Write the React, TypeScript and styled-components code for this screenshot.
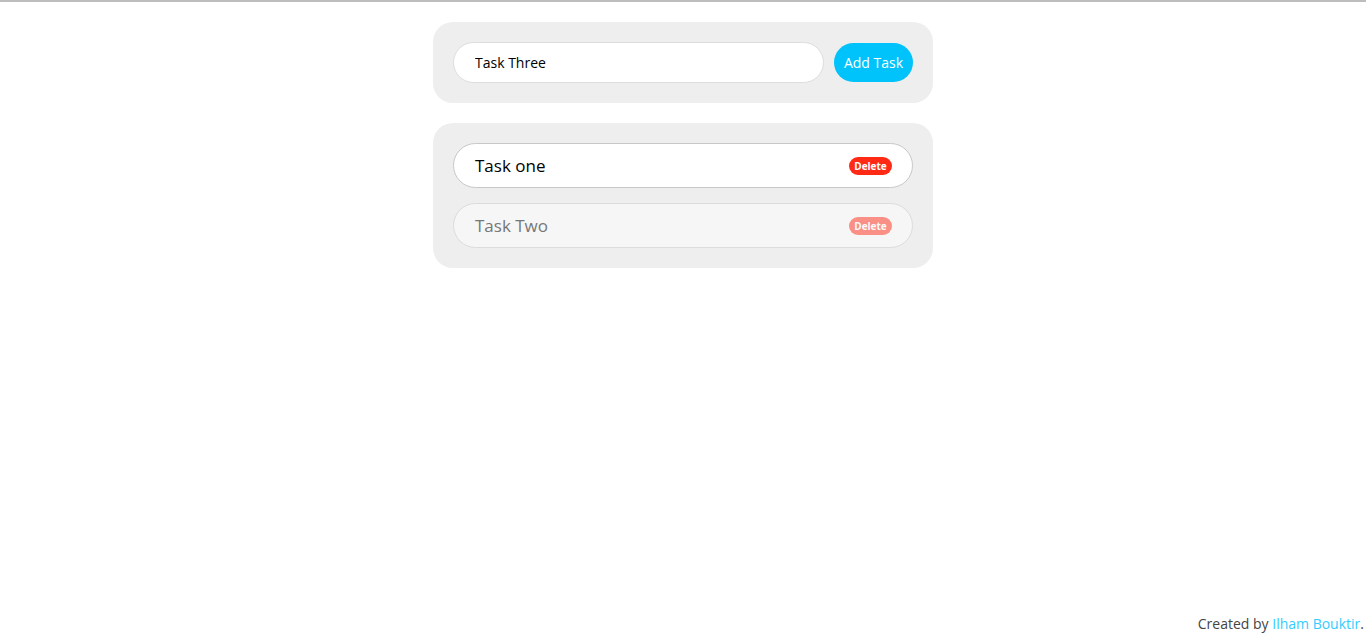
import React, { useState } from "react";
import styled, { createGlobalStyle } from "styled-components";

const Global = createGlobalStyle`
  html, body { margin: 0; padding: 0; background: #fff; }
  body {
    font-family: "Comic Sans MS", "Open Sans", "DejaVu Sans", sans-serif;
    border-top: 2px solid #bdbdbd;
    min-height: 638px;
  }
  #root { min-height: 638px; }
`;

const Page = styled.div`
  min-height: 638px;
  display: flex;
  flex-direction: column;
  align-items: center;
  padding-top: 20px;
  box-sizing: border-box;
  position: relative;
`;

const Card = styled.div`
  width: 500px;
  box-sizing: border-box;
  background: #eeeeee;
  border-radius: 20px;
  padding: 20px;
  margin-bottom: 20px;
`;

const Form = styled.form`
  display: flex;
  align-items: center;
  gap: 10px;
  margin: 0;
`;

const Input = styled.input`
  flex: 1;
  height: 41px;
  box-sizing: border-box;
  border: 1px solid #dddddd;
  border-radius: 21px;
  background: #fff;
  padding: 0 21px;
  font-family: inherit;
  font-size: 14px;
  color: #000;
  outline: none;
`;

const AddButton = styled.button`
  width: 79px;
  height: 39px;
  border: none;
  border-radius: 20px;
  background: #00c3fb;
  color: #fff;
  font-family: inherit;
  font-size: 14px;
  padding: 0;
  cursor: pointer;
`;

const List = styled.ul`
  list-style: none;
  margin: 0;
  padding: 0;
  display: flex;
  flex-direction: column;
  gap: 15px;
`;

const Item = styled.li<{ $done?: boolean }>`
  height: 45px;
  box-sizing: border-box;
  border: 1px solid ${(p) => (p.$done ? "#dcdcdc" : "#c8c8c8")};
  border-radius: 23px;
  background: ${(p) => (p.$done ? "#f6f6f6" : "#fff")};
  display: flex;
  align-items: center;
  justify-content: space-between;
  padding: 0 20px 0 21px;
`;

const ItemText = styled.span<{ $done?: boolean }>`
  font-size: 17px;
  color: ${(p) => (p.$done ? "#777" : "#000")};
`;

const DeleteButton = styled.button<{ $done?: boolean }>`
  height: 18px;
  width: 43px;
  border: none;
  border-radius: 9px;
  background: #ff2a16;
  color: #fff;
  font-family: inherit;
  font-size: 10px;
  font-weight: bold;
  padding: 0;
  opacity: ${(p) => (p.$done ? 0.5 : 1)};
  cursor: pointer;
`;

const Footer = styled.footer`
  position: absolute;
  right: 2px;
  bottom: 7px;
  font-size: 14px;
  color: #444;
`;

const Link = styled.a`
  color: #33ccff;
  text-decoration: none;
`;

export default function App() {
  const [value, setValue] = useState("Task Three");
  const tasks = [
    { text: "Task one", done: false },
    { text: "Task Two", done: true },
  ];
  return (
    <>
      <Global />
      <Page>
        <Card>
          <Form onSubmit={(e) => e.preventDefault()}>
            <Input value={value} onChange={(e) => setValue(e.target.value)} />
            <AddButton type="submit">Add Task</AddButton>
          </Form>
        </Card>
        <Card>
          <List>
            {tasks.map((t) => (
              <Item key={t.text} $done={t.done}>
                <ItemText $done={t.done}>{t.text}</ItemText>
                <DeleteButton $done={t.done}>Delete</DeleteButton>
              </Item>
            ))}
          </List>
        </Card>
        <Footer>
          Created by <Link href="#">Ilham Bouktir</Link>.
        </Footer>
      </Page>
    </>
  );
}
